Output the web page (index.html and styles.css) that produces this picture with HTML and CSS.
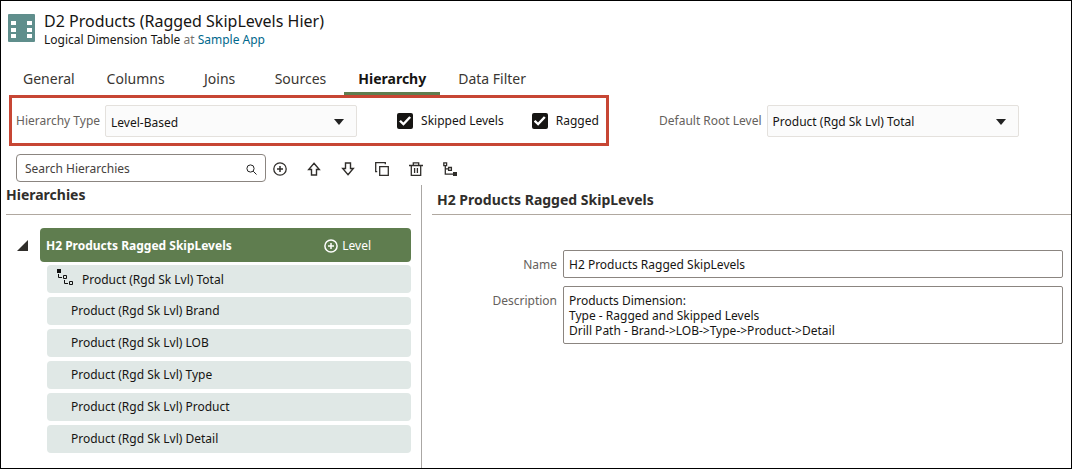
FILE: index.html
```html
<!DOCTYPE html>
<html lang="en">
<head>
<meta charset="utf-8">
<meta name="viewport" content="width=device-width, initial-scale=1">
<title>D2 Products (Ragged SkipLevels Hier)</title>
<link rel="stylesheet" href="styles.css">
</head>
<body>
<div class="page">
  <header class="header">
    <svg class="header-icon" width="27" height="28" viewBox="0 0 27 28" aria-hidden="true">
      <rect width="27" height="28" rx="1" fill="#5f8e8c"/>
      <path fill="#fff" d="M3 7h5v4H3zM3 14h5v4H3zM3 20h5v4H3zM19 7h5v4h-5zM19 14h5v4h-5zM19 20h5v4h-5z"/>
    </svg>
    <div>
      <h1 class="title">D2 Products (Ragged SkipLevels Hier)</h1>
      <p class="subtitle">Logical Dimension Table <span class="muted">at</span> <a href="#">Sample App</a></p>
    </div>
  </header>

  <nav class="tabs" role="tablist">
    <button class="tab" role="tab">General</button>
    <button class="tab" role="tab">Columns</button>
    <button class="tab tab-short" role="tab">Joins</button>
    <button class="tab" role="tab">Sources</button>
    <button class="tab tab-active" role="tab" aria-selected="true">Hierarchy</button>
    <button class="tab" role="tab">Data Filter</button>
  </nav>

  <div class="settings">
    <div class="highlight">
      <label class="field-label" for="type">Hierarchy Type</label>
      <div class="select">
        <select id="type"><option>Level-Based</option></select>
        <svg class="select-arrow" width="10" height="6" viewBox="0 0 10 6" aria-hidden="true"><path d="M0 0h10L5 6z" fill="#222"/></svg>
      </div>
      <label class="check"><input type="checkbox" checked>Skipped Levels</label>
      <label class="check"><input type="checkbox" checked>Ragged</label>
    </div>
    <div class="root-level">
      <label class="field-label" for="root">Default Root Level</label>
      <div class="select">
        <select id="root"><option>Product (Rgd Sk Lvl) Total</option></select>
        <svg class="select-arrow" width="10" height="6" viewBox="0 0 10 6" aria-hidden="true"><path d="M0 0h10L5 6z" fill="#222"/></svg>
      </div>
    </div>
  </div>

  <div class="toolbar">
    <div class="search">
      <input type="search" placeholder="Search Hierarchies" aria-label="Search Hierarchies">
      <svg width="11" height="11" viewBox="0 0 11 11" fill="none" stroke="#222" aria-hidden="true"><circle cx="4.5" cy="4.5" r="3.6"/><path d="M7.2 7.2L10.5 10.5"/></svg>
    </div>
    <div class="tools">
      <button class="tool" aria-label="Add"><svg width="14" height="14" viewBox="0 0 14 14" fill="none" stroke="#302e2b"><circle cx="7" cy="7" r="6.2" stroke-width="1.3"/><path d="M7 4v6M4 7h6" stroke-width="1.5"/></svg></button>
      <button class="tool" aria-label="Move up"><svg width="14" height="14" viewBox="0 0 14 14" fill="none" stroke="#302e2b" stroke-width="1.4"><path d="M7 1.300L12.300 7.500H9.500V13h-5V7.500H1.700z"/></svg></button>
      <button class="tool" aria-label="Move down"><svg width="14" height="14" viewBox="0 0 14 14" fill="none" stroke="#302e2b" stroke-width="1.4"><path d="M7 12.700L12.300 6.500H9.500V1h-5v5.500H1.700z"/></svg></button>
      <button class="tool" aria-label="Duplicate"><svg width="14" height="14" viewBox="0 0 14 14" fill="none" stroke="#302e2b" stroke-width="1.3"><path d="M4.7 4.7h8.6v8.6H4.7zM2.2 9.6H.7V.7h9.600v1.500"/></svg></button>
      <button class="tool" aria-label="Delete"><svg width="14" height="14" viewBox="0 0 14 14" fill="none" stroke="#302e2b" stroke-width="1.3"><path d="M0 3.5h14M4.3 3.3V.9h5.4v2.4M2.3 3.5v9.8h9.4V3.5M5.6 6v5M8.4 6v5"/></svg></button>
      <button class="tool" aria-label="View hierarchy"><svg width="14" height="14" viewBox="0 0 14 14" fill="none" stroke="#302e2b" stroke-width="1.3"><path d="M.8.8h2.800v2.800H.8zM2.300 4v8.200H10M2.500 6.900h3M5.600 5.500h2.800v2.800H5.600z"/><path d="M10 10h4v4h-4z" fill="#302e2b" stroke="none"/></svg></button>
    </div>
  </div>

  <main class="panes">
    <section class="tree">
      <h2 class="tree-heading">Hierarchies</h2>
      <div class="root-row">
        <button class="toggle" aria-label="Collapse"><svg width="11" height="11" viewBox="0 0 11 11"><path d="M11 0v11H0z" fill="#302e2b"/></svg></button>
        <div class="root-node">
          <span class="root-name">H2 Products Ragged SkipLevels</span>
          <button class="add-level"><svg width="14" height="14" viewBox="0 0 14 14" fill="none" stroke="#fff" stroke-width="1.5" aria-hidden="true"><circle cx="7" cy="7" r="6.1"/><path d="M7 4v6M4 7h6"/></svg>Level</button>
        </div>
      </div>
      <ul class="levels">
        <li class="level level-total"><svg width="16" height="16" viewBox="0 0 16 16" aria-hidden="true"><path d="M0 0h4v4H0z" fill="#111"/><path d="M1.5 5v3.5H5M7.5 11v3.500H11M6.500 6.500h3v3h-3zM12.500 12.500h3v3h-3z" fill="none" stroke="#111"/></svg>Product (Rgd Sk Lvl) Total</li>
        <li class="level">Product (Rgd Sk Lvl) Brand</li>
        <li class="level">Product (Rgd Sk Lvl) LOB</li>
        <li class="level">Product (Rgd Sk Lvl) Type</li>
        <li class="level">Product (Rgd Sk Lvl) Product</li>
        <li class="level">Product (Rgd Sk Lvl) Detail</li>
      </ul>
    </section>
    <section class="detail">
      <h2 class="detail-heading">H2 Products Ragged SkipLevels</h2>
      <form class="form">
        <label class="field-label" for="name">Name</label>
        <input class="text-box" id="name" type="text" value="H2 Products Ragged SkipLevels">
        <label class="field-label" for="description">Description</label>
        <textarea class="text-box text-area" id="description" rows="3">Products Dimension:
Type - Ragged and Skipped Levels
Drill Path - Brand-&gt;LOB-&gt;Type-&gt;Product-&gt;Detail</textarea>
      </form>
    </section>
  </main>
</div>
</body>
</html>
```
FILE: styles.css
```css
* {
  box-sizing: border-box;
}

body {
  margin: 0;
  background: #fff;
  color: #161513;
  font: 12px/16px "Noto Sans", sans-serif;
}

button,
input,
select,
textarea {
  margin: 0;
  font: inherit;
  color: inherit;
}

button {
  padding: 0;
  border: 0;
  background: none;
  cursor: pointer;
}

svg {
  display: block;
  flex: none;
}

.page {
  display: flex;
  flex-direction: column;
  min-height: 100vh;
  border: 1px solid #000;
}

.header {
  display: flex;
  gap: 9px;
  padding: 10px 7px 0;
}

.header-icon {
  margin-top: 3px;
}

.title {
  margin: 0;
  font-size: 16px;
  font-weight: 400;
  line-height: 20px;
}

.subtitle {
  margin: 1px 0 0;
}

.subtitle a {
  color: #00688c;
  text-decoration: none;
}

.muted {
  color: #75716c;
}

.tabs {
  display: flex;
  gap: 4px;
  margin-top: 17px;
  padding-left: 8px;
}

.tab {
  height: 30px;
  padding: 0 14px;
  border-bottom: 3px solid transparent;
  color: #3a3632;
  font-size: 14px;
}

.tab-short {
  min-width: 74px;
}

.tab-active {
  border-color: #5f7d4f;
  color: #161513;
  font-weight: 700;
}

.settings {
  display: flex;
  align-items: center;
  gap: 50px;
  padding-left: 8px;
}

.highlight {
  display: flex;
  align-items: center;
  width: 600px;
  padding: 7px 4px 6px;
  border: 3px solid #c74634;
}

.root-level {
  display: flex;
  align-items: center;
}

.field-label {
  color: #65615c;
}

.select {
  position: relative;
  width: 252px;
  margin-left: 5px;
}

.select select {
  display: block;
  width: 100%;
  height: 32px;
  padding: 3px 24px 0 5px;
  border: 1px solid #e4e1dd;
  border-radius: 2px;
  background: #fbfbfb;
  appearance: none;
}

.select-arrow {
  position: absolute;
  top: 14px;
  right: 13px;
  pointer-events: none;
}

.check {
  display: flex;
  align-items: center;
  gap: 8px;
  margin-left: 28px;
}

.select + .check {
  margin-left: 40px;
}

.check input {
  display: grid;
  place-items: center;
  width: 16px;
  height: 16px;
  border-radius: 2px;
  background: #161513;
  appearance: none;
}

.check input:checked::before {
  content: "";
  width: 12px;
  height: 10px;
  background: #fff;
  clip-path: polygon(0 55%, 15% 40%, 36% 64%, 85% 2%, 100% 17%, 37% 98%);
}

.toolbar {
  display: flex;
  align-items: center;
  gap: 1px;
  padding: 8px 15px 3px;
}

.search {
  display: flex;
  align-items: center;
  width: 250px;
  height: 28px;
  padding: 2px 8px 0;
  border: 1px solid #8b8580;
  border-radius: 4px;
}

.search input {
  flex: 1;
  min-width: 0;
  padding: 0;
  border: 0;
  outline: 0;
  background: none;
}

.search input::placeholder {
  color: #45413d;
  opacity: 1;
}

.tools {
  display: flex;
  gap: 8px;
  padding-top: 2px;
}

.tool {
  display: grid;
  place-items: center;
  width: 26px;
  height: 26px;
}

.panes {
  display: flex;
  flex: 1;
}

.tree {
  width: 421px;
  padding: 0 10px 15px 5px;
  border-right: 1px solid #aaa7a4;
}

.tree-heading,
.detail-heading {
  height: 30px;
  margin: 0;
  border-bottom: 1px solid #b0a8a0;
  color: #302e2b;
  font-size: 14px;
  line-height: 20px;
}

.detail-heading {
  padding: 5px 5px 0;
}

.root-row {
  display: flex;
  align-items: center;
  gap: 12px;
  margin-top: 13px;
  padding-left: 11px;
}

.root-node {
  display: flex;
  flex: 1;
  align-items: center;
  justify-content: space-between;
  height: 34px;
  padding: 2px 40px 0 6px;
  border-radius: 4px;
  background: #5f7d4f;
  color: #fff;
}

.root-name {
  font-weight: 700;
}

.add-level {
  display: flex;
  align-items: center;
  gap: 4px;
}

.levels {
  display: grid;
  gap: 4px;
  margin: 3px 0 0;
  padding: 0 0 0 41px;
  list-style: none;
}

.level {
  display: flex;
  align-items: center;
  height: 28px;
  padding: 0 24px;
  border-radius: 4px;
  background: #e0e8e6;
}

.level-total {
  gap: 9px;
  padding: 2px 10px 0;
}

.level-total svg {
  margin-bottom: 6px;
}

.detail {
  flex: 1;
  min-width: 0;
  padding-left: 10px;
}

.form {
  display: grid;
  grid-template-columns: 125px 1fr;
  gap: 8px 6px;
  align-items: start;
  padding: 35px 8px 0 0;
}

.form .field-label {
  padding-top: 7px;
  text-align: right;
}

.text-box {
  display: block;
  width: 100%;
  height: 28px;
  padding: 0 5px;
  border: 1px solid #8b8580;
  border-radius: 2px;
  background: #fff;
}

.text-area {
  height: auto;
  padding: 6px 5px 5px;
  line-height: 15px;
  resize: none;
}
```
